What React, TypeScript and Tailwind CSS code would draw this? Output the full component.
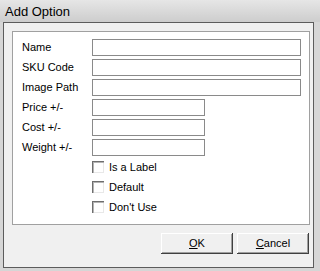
const fields = [
  { label: "Name", wide: true },
  { label: "SKU Code", wide: true },
  { label: "Image Path", wide: true },
  { label: "Price +/-", wide: false },
  { label: "Cost +/-", wide: false },
  { label: "Weight +/-", wide: false },
];

const checks = ["Is a Label", "Default", "Don't Use"];

function Button({ children }: { children: React.ReactNode }) {
  return (
    <button className="w-[72px] h-[21px] bg-[#f0f0f0] text-[11px] text-black flex items-center justify-center shadow-[inset_-1px_-1px_#404040,inset_1px_1px_#ffffff,inset_-2px_-2px_#a0a0a0]">
      {children}
    </button>
  );
}

export default function App() {
  return (
    <div className="w-[320px] h-[271px] flex flex-col bg-[#d6d6d6] font-['Liberation_Sans',Arial,sans-serif] overflow-hidden">
      {/* title bar */}
      <div className="h-[22px] flex items-center pl-[5px] bg-gradient-to-b from-[#e6e6e6] to-[#cdcdcd]">
        <span className="text-[13px] text-black leading-none">Add Option</span>
      </div>

      <div className="flex-1 flex pl-[3px] pr-[6px] pb-[3px]">
        <div className="flex-1 flex flex-col border border-[#5c5c5c] bg-[#f0f0f0]">
          {/* group panel */}
          <div className="mt-[8px] ml-[8px] w-[298px] h-[194px] border border-[#a0a0a0] bg-white pl-[9px] pt-[7px]">
            <div className="flex flex-col gap-[3px]">
              {fields.map((f) => (
                <div key={f.label} className="flex items-center h-[17px]">
                  <span className="w-[70px] text-[11px] text-black">{f.label}</span>
                  <div
                    className={`h-[17px] border border-[#8a8a8a] bg-white ${
                      f.wide ? "w-[209px]" : "w-[113px]"
                    }`}
                  />
                </div>
              ))}
            </div>
            <div className="flex flex-col mt-[1px] ml-[70px]">
              {checks.map((c) => (
                <div key={c} className="flex items-center h-[20px] gap-[5px]">
                  <div className="w-[12px] h-[12px] bg-white shadow-[inset_1px_1px_#6e6e6e,inset_2px_2px_#b4b4b4,inset_-1px_-1px_#e8e8e8]" />
                  <span className="text-[11px] text-black">{c}</span>
                </div>
              ))}
            </div>
          </div>

          {/* buttons */}
          <div className="flex justify-end gap-[4px] mt-[8px] pr-[4px]">
            <Button>
              <span className="underline">O</span>K
            </Button>
            <Button>
              <span className="underline">C</span>ancel
            </Button>
          </div>
        </div>
      </div>
    </div>
  );
}
